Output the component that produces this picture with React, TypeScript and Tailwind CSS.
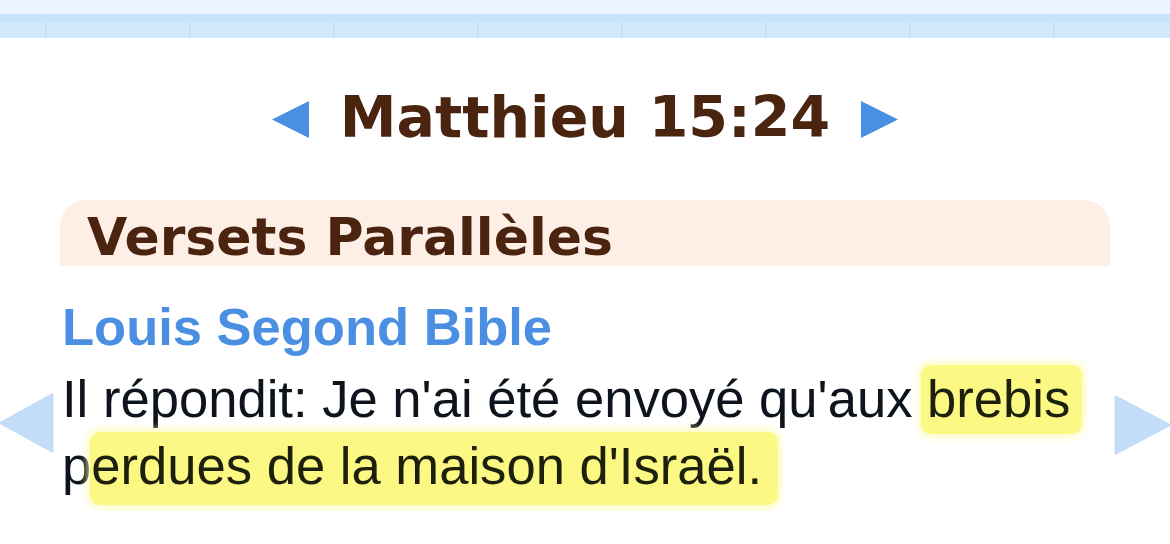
import React from 'react';

const tabs = [0, 1, 2, 3, 4, 5, 6, 7];

function Tri({ dir, className }: { dir: 'left' | 'right'; className: string }) {
  return (
    <svg viewBox="0 0 40 40" className={className}>
      {dir === 'left' ? <polygon points="39,1 39,39 1,20" fill="#4a90e2" /> : <polygon points="1,1 1,39 39,20" fill="#4a90e2" />}
    </svg>
  );
}

export default function App() {
  return (
    <div className="relative w-[1170px] h-[544px] overflow-hidden bg-white">
      {/* top tab strip, cut off */}
      <div className="h-[14px] bg-[#e9f4fe]" />
      <div className="h-[8px] bg-[#c7e3fb]" />
      <div className="h-[16px] bg-[#d2e9fc] flex overflow-hidden">
        <div className="w-[45px] shrink-0" />
        {tabs.map((t) => (
          <div key={t} className="w-[144px] shrink-0 border-l-2 border-[#c6e0f6]" />
        ))}
      </div>

      {/* chapter title */}
      <div className="mt-[46px] flex items-center justify-center gap-[30px]" style={{ fontFamily: '"DejaVu Sans", Verdana, sans-serif' }}>
        <Tri dir="left" className="w-[39px] h-[39px] mt-[4px]" />
        <h1 className="text-[57px] leading-[66px] font-bold text-[#4b2410]">Matthieu 15:24</h1>
        <Tri dir="right" className="w-[39px] h-[39px] mt-[4px]" />
      </div>

      <div className="mt-[50px] mx-[60px]">
        <div className="h-[66px] bg-[#fdeee6] rounded-t-[26px] pl-[27px] pt-[8px]" style={{ fontFamily: '"DejaVu Sans", Verdana, sans-serif' }}>
          <h2 className="text-[52px] leading-[58px] font-bold text-[#4b2410]">Versets Parallèles</h2>
        </div>

        <div className="pl-[2px] pr-[10px]" style={{ fontFamily: '"Liberation Sans", Arial, sans-serif' }}>
          <div className="mt-[27px] text-[52.5px] leading-[67px] font-bold text-[#4a8fe2]">Louis Segond Bible</div>
          <p className="mt-[5px] text-[52.6px] leading-[67px] text-[#0e141b]">
            Il répondit: Je n'ai été envoyé qu'aux{' '}
            <span className="bg-[#fbf884] text-[#1d200d] rounded-[10px] pt-[4px] pb-[6px] pl-[6px] -ml-[6px] pr-[12px] -mr-[12px] shadow-[0_0_8px_2px_#fdfbb0]">brebis</span>{' '}
            p<span className="bg-[#fbf884] text-[#1d200d] rounded-[10px] pt-[4px] pb-[10px] pl-[1px] -ml-[1px] pr-[16px] -mr-[16px] shadow-[0_0_8px_2px_#fdfbb0]">erdues de la maison d'Israël.</span>
          </p>
        </div>
      </div>

      {/* side paging arrows */}
      <svg viewBox="0 0 54 62" className="absolute left-0 top-[392px] w-[54px] h-[62px]">
        <polygon points="52,3 52,59 1,31" fill="#c3ddf8" stroke="#c3ddf8" strokeWidth="3" strokeLinejoin="round" />
      </svg>
      <svg viewBox="0 0 56 62" className="absolute left-[1114px] top-[394px] w-[56px] h-[62px]">
        <polygon points="2,3 2,59 55,31" fill="#c3ddf8" stroke="#c3ddf8" strokeWidth="3" strokeLinejoin="round" />
      </svg>
    </div>
  );
}
